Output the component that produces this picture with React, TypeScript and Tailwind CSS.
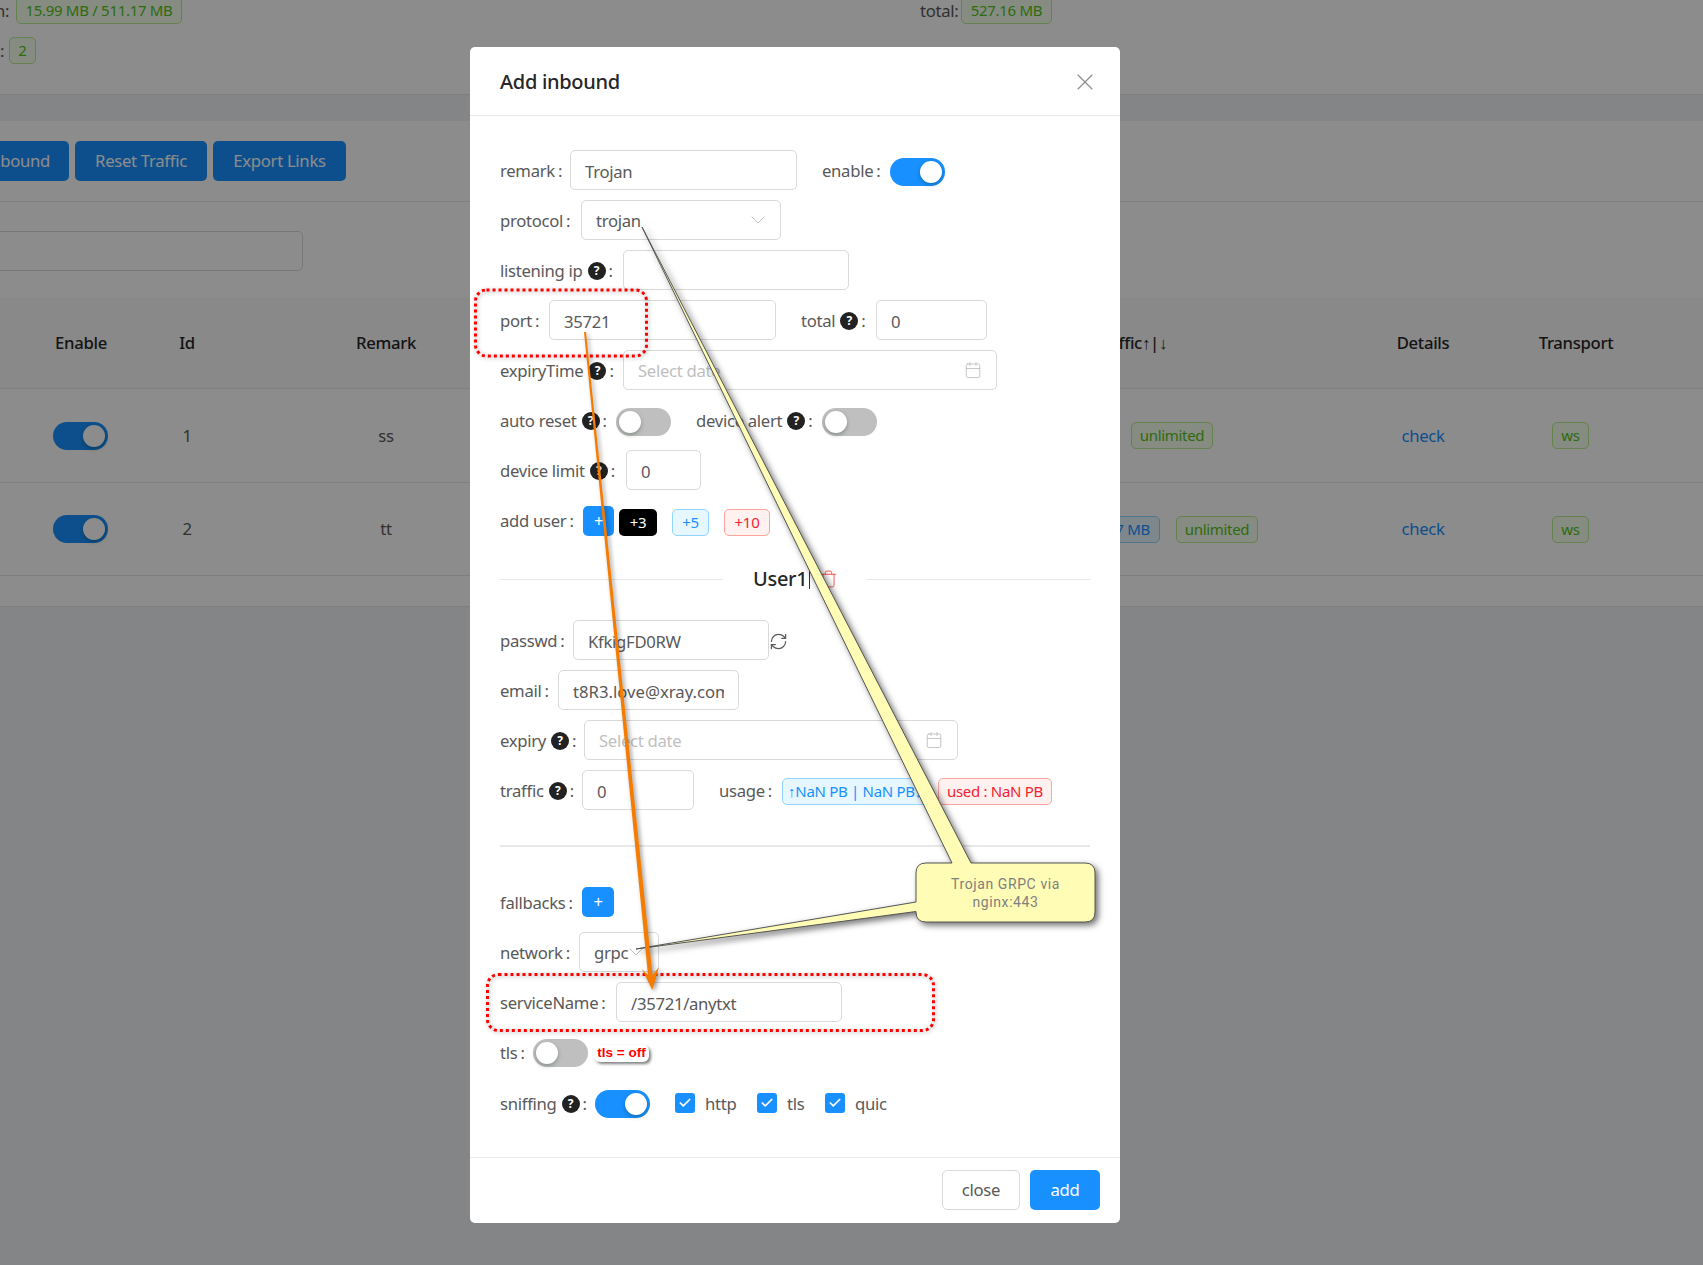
import React from 'react';
import { X, ChevronDown, Calendar, RefreshCw, Check, Trash } from 'lucide-react';

const Tag = ({ color, className = '', children }: { color: 'green' | 'blue' | 'red'; className?: string; children: React.ReactNode }) => {
  const tone = color === 'green'
    ? 'bg-[#f6ffed] border-[#b7eb8f] text-[#52c41a]'
    : color === 'blue'
      ? 'bg-[#e6f7ff] border-[#91d5ff] text-[#1890ff]'
      : 'bg-[#fff1f0] border-[#ffa39e] text-[#f5222d]';
  return (
    <span className={`inline-flex items-center justify-center shrink-0 h-[27px] px-[9px] border rounded-[5px] text-[15px] whitespace-nowrap ${tone} ${className}`}>
      {children}
    </span>
  );
};

const Switch = ({ on, className = '' }: { on?: boolean; className?: string }) => (
  <span className={`flex items-center shrink-0 w-[55px] h-[28px] px-[3px] rounded-full ${on ? 'bg-[#1890ff] justify-end' : 'bg-[#bfbfbf] justify-start'} ${className}`}>
    <span className="w-[22px] h-[22px] rounded-full bg-white shadow-[0_2px_4px_rgba(0,35,11,0.3)]" />
  </span>
);

const Help = () => (
  <span className="flex items-center justify-center shrink-0 w-[18px] h-[18px] ml-[5px] rounded-full bg-[#222] text-white text-[12px] font-bold leading-none">?</span>
);

const Label = ({ className, help, children }: { className: string; help?: boolean; children: React.ReactNode }) => (
  <span className={`flex items-center shrink-0 pt-[2px] whitespace-nowrap ${className}`}>
    {children}
    {help && <Help />}
    <span className="ml-[3px]">:</span>
  </span>
);

const Row = ({ className = '', children }: { className?: string; children: React.ReactNode }) => (
  <div className={`flex items-center h-10 mb-2.5 ${className}`}>{children}</div>
);

const Field = ({ className, value, placeholder }: { className: string; value?: string; placeholder?: string }) => (
  <input
    readOnly
    value={value ?? ''}
    placeholder={placeholder}
    className={`h-10 pt-[2px] px-[14px] shrink-0 border border-[#d9d9d9] rounded-[5px] bg-white text-[#595959] placeholder:text-[#bfbfbf] outline-none ${className}`}
  />
);

const Picker = ({ className, text, date }: { className: string; text: string; date?: boolean }) => (
  <div className={`flex items-center justify-between h-10 shrink-0 border border-[#d9d9d9] rounded-[5px] bg-white ${date ? 'pl-[14px] pr-[14px]' : 'pl-[14px] pr-[10px]'} ${className}`}>
    <span className={`pt-[2px] ${date ? 'text-[#bfbfbf]' : 'text-[#595959]'}`}>{text}</span>
    {date
      ? <Calendar className="w-[18px] h-[18px] text-[#bfbfbf]" strokeWidth={1.2} />
      : <ChevronDown className="w-6 h-6 -ml-[10px] shrink-0 text-[#bfbfbf]" strokeWidth={1} />}
  </div>
);

const Box = ({ label, className }: { label: string; className: string }) => (
  <span className={`flex items-center shrink-0 ${className}`}>
    <span className="flex items-center justify-center w-5 h-5 rounded-[3px] bg-[#1890ff]">
      <Check className="w-[14px] h-[14px] text-white" strokeWidth={3} />
    </span>
    <span className="ml-[10px] pt-[2px] text-[#595959]">{label}</span>
  </span>
);

const TopButton = ({ className, children }: { className: string; children: React.ReactNode }) => (
  <button className={`flex items-center h-10 shrink-0 rounded-[5px] bg-[#1890ff] text-white ${className}`}>{children}</button>
);

const TableRow = ({ id, remark, traffic, border }: { id: string; remark: string; traffic: React.ReactNode; border: string }) => (
  <div className={`flex items-center border-b border-[#e8e8e8] text-[#595959] ${border}`}>
    <div className="flex justify-center w-[162px] pr-[1px]"><Switch on /></div>
    <div className="w-[50px] text-center">{id}</div>
    <div className="w-[348px] text-center">{remark}</div>
    <div className="flex justify-end w-[780px]">{traffic}</div>
    <div className="w-[166px] text-center text-[#1890ff]">check</div>
    <div className="flex justify-center w-[140px]"><Tag color="green" className="w-[37px] mr-[11px]">ws</Tag></div>
  </div>
);

export default function App() {
  return (
    <div className="relative w-[1703px] h-[1265px] overflow-hidden bg-[#f0f2f5] text-[16.7px] tracking-[-0.3px] font-['Noto_Sans','Open_Sans',sans-serif]">
      {/* page under the dialog */}
      <div className="flex flex-col h-[95px] bg-white border-b border-[#e8e8e8] text-[#595959]">
        <div className="flex items-center h-[27px] -mt-[3px]">
          <div className="flex items-center w-[920px]">
            <span className="-ml-[9px] w-[25px]">in:</span>
            <Tag color="green" className="w-[166px]">15.99 MB / 511.17 MB</Tag>
          </div>
          <span className="w-[41px]">total:</span>
          <Tag color="green" className="w-[91px]">527.16 MB</Tag>
        </div>
        <div className="flex items-center mt-[13px]">
          <span className="w-[9px]">:</span>
          <Tag color="green" className="w-[27px]">2</Tag>
        </div>
      </div>
      <div className="mt-[26px] h-[486px] bg-white border-b border-[#e8e8e8]">
        <div className="flex items-center gap-[6px] h-[81px] border-b border-[#e8e8e8] -ml-[60px]">
          <TopButton className="justify-end w-[129px] pr-[19px]">Add Inbound</TopButton>
          <TopButton className="justify-center w-[132px]">Reset Traffic</TopButton>
          <TopButton className="justify-center w-[133px]">Export Links</TopButton>
        </div>
        <div className="h-[95px] pt-[29px]">
          <div className="h-10 w-[303px] border border-l-0 border-[#d9d9d9] rounded-r-[5px]" />
        </div>
        <div className="flex items-center h-[92px] bg-[#fafafa] border-b border-[#e8e8e8] font-medium text-[#262626]">
          <div className="w-[162px] text-center">Enable</div>
          <div className="w-[50px] text-center">Id</div>
          <div className="w-[348px] text-center">Remark</div>
          <div className="w-[780px] pr-[173px] text-right">Traffic↑|↓</div>
          <div className="w-[166px] text-center">Details</div>
          <div className="w-[140px] text-center">Transport</div>
        </div>
        <TableRow id="1" remark="ss" border="h-[94px]" traffic={<Tag color="green" className="mr-[127px] w-[82px]">unlimited</Tag>} />
        <TableRow
          id="2"
          remark="tt"
          border="h-[93px]"
          traffic={
            <>
              <Tag color="blue" className="mr-[16px]">↑15.99 MB | 511.17 MB</Tag>
              <Tag color="green" className="mr-[82px] w-[82px]">unlimited</Tag>
            </>
          }
        />
      </div>

      <div className="absolute inset-0 bg-black/45" />

      {/* dialog */}
      <div className="absolute left-[470px] top-[47px] flex flex-col w-[650px] h-[1176px] rounded-[5px] bg-white text-[#595959]">
        <div className="flex items-center justify-between h-[69px] pt-[2px] px-[30px] border-b border-[#e8e8e8] shrink-0">
          <span className="text-[20px] font-medium text-[#262626]">Add inbound</span>
          <X className="w-7 h-7 -mr-[9px] text-[#8c8c8c]" strokeWidth={1} />
        </div>

        <div className="flex-1 px-[30px] pt-[34px]">
          <Row>
            <Label className="w-[70px]">remark</Label>
            <Field className="w-[227px]" value="Trojan" />
            <Label className="w-[68px] ml-[25px]">enable</Label>
            <Switch on className="mt-[3px]" />
          </Row>
          <Row>
            <Label className="w-[81px]">protocol</Label>
            <Picker className="w-[200px]" text="trojan" />
          </Row>
          <Row>
            <Label className="w-[123px]" help>listening ip</Label>
            <Field className="w-[226px]" />
          </Row>
          <Row>
            <Label className="w-[49px]">port</Label>
            <Field className="w-[227px]" value="35721" />
            <Label className="w-[75px] ml-[25px]" help>total</Label>
            <Field className="w-[111px]" value="0" />
          </Row>
          <Row>
            <Label className="w-[123px]" help>expiryTime</Label>
            <Picker className="w-[374px]" text="Select date" date />
          </Row>
          <Row>
            <Label className="w-[116px]" help>auto reset</Label>
            <Switch className="mt-[3px]" />
            <Label className="w-[126px] ml-[25px]" help>device alert</Label>
            <Switch className="mt-[3px]" />
          </Row>
          <Row>
            <Label className="w-[126px]" help>device limit</Label>
            <Field className="w-[75px]" value="0" />
          </Row>
          <Row>
            <Label className="w-[83px]">add user</Label>
            <button className="w-[31px] h-[30px] mt-[2px] rounded-[5px] bg-[#1890ff] text-white">+</button>
            <span className="flex items-center justify-center w-[38px] h-[27px] ml-[5px] mt-[5px] rounded-[5px] bg-black text-white text-[15px]">+3</span>
            <Tag color="blue" className="w-[37px] ml-[15px] mt-[5px]">+5</Tag>
            <Tag color="red" className="w-[46px] ml-[15px] mt-[5px]">+10</Tag>
          </Row>

          <div className="flex items-center h-[58px] mb-[12px]">
            <div className="w-[223px] h-px bg-[#e8e8e8]" />
            <div className="flex items-center w-[143px] pl-[30px]">
              <span className="text-[20px] font-medium text-[#262626]">User1</span>
              <span className="w-px h-5 ml-[2px] bg-[#333]" />
              <Trash className="w-[19px] h-[20px] ml-[9px] text-[#ff4d4f]" strokeWidth={1.2} />
            </div>
            <div className="flex-1 h-px bg-[#e8e8e8]" />
          </div>

          <Row>
            <Label className="w-[73px]">passwd</Label>
            <Field className="w-[196px]" value="KfkigFD0RW" />
            <RefreshCw className="w-[19px] h-[19px] mt-[2px] text-[#595959]" strokeWidth={1.5} />
          </Row>
          <Row>
            <Label className="w-[58px]">email</Label>
            <Field className="w-[181px] tracking-normal" value="t8R3.love@xray.com" />
          </Row>
          <Row>
            <Label className="w-[84px]" help>expiry</Label>
            <Picker className="w-[374px]" text="Select date" date />
          </Row>
          <Row>
            <Label className="w-[82px]" help>traffic</Label>
            <Field className="w-[112px]" value="0" />
            <Label className="w-[63px] ml-[25px]">usage</Label>
            <Tag color="blue" className="w-[146px] mr-[10px] mt-[3px]">↑NaN PB | NaN PB↓</Tag>
            <Tag color="red" className="w-[114px] mt-[3px]">used : NaN PB</Tag>
          </Row>

          <div className="h-[2px] mt-[35px] mb-[35px] bg-[#e8e8e8]" />

          <Row>
            <Label className="w-[82px]">fallbacks</Label>
            <button className="w-[32px] h-[30px] rounded-[5px] bg-[#1890ff] text-white">+</button>
          </Row>
          <Row>
            <Label className="w-[79px]">network</Label>
            <Picker className="w-[80px]" text="grpc" />
          </Row>
          <Row>
            <Label className="w-[116px]">serviceName</Label>
            <Field className="w-[226px]" value="/35721/anytxt" />
          </Row>
          <Row>
            <Label className="w-[33px]">tls</Label>
            <Switch className="mt-[2px]" />
            <span className="flex items-center justify-center w-[55px] h-[17px] ml-[6px] mt-[2px] rounded-[6px] bg-white shadow-[2px_2px_3px_rgba(0,0,0,0.5)] text-[13.5px] tracking-normal font-bold text-[#ff0000] font-['Liberation_Sans',sans-serif]">tls = off</span>
          </Row>
          <Row className="mt-[11px]">
            <Label className="w-[95px]" help>sniffing</Label>
            <Switch on className="mt-[2px]" />
            <Box label="http" className="ml-[25px] w-[82px]" />
            <Box label="tls" className="w-[68px]" />
            <Box label="quic" className="w-[80px]" />
          </Row>
        </div>

        <div className="flex items-start justify-end gap-[10px] h-[66px] pt-[12px] pr-[20px] border-t border-[#e8e8e8] shrink-0">
          <button className="w-[78px] h-10 rounded-[5px] border border-[#d9d9d9] text-[#595959]">close</button>
          <button className="w-[70px] h-10 rounded-[5px] bg-[#1890ff] text-white">add</button>
        </div>
      </div>

      {/* annotations drawn on top of the screenshot */}
      <svg className="absolute inset-0 w-full h-full pointer-events-none" viewBox="0 0 1703 1265">
        <g className="drop-shadow-[1px_1px_2px_rgba(0,0,0,0.35)]" fill="none" stroke="#ff0000" strokeWidth="3" strokeDasharray="3 3">
          <rect x="475.5" y="290" width="171" height="66" rx="11" />
          <rect x="487.5" y="974.5" width="446" height="56" rx="11" />
        </g>
        <path
          className="drop-shadow-[3px_3px_3px_rgba(0,0,0,0.55)]"
          d="M926 863 L952 863 L642 227 L971 863 L1085 863 Q1095 863 1095 873 L1095 912 Q1095 922 1085 922 L926 922 Q916 922 916 912 L916 911.5 L636 949 L916 902 L916 873 Q916 863 926 863 Z"
          fill="#fffdb5"
          stroke="#555"
          strokeWidth="1"
        />
        <path
          className="drop-shadow-[2px_2px_2px_rgba(0,0,0,0.4)]"
          d="M584 332 L586 332 L652.5 975 L659 967 L652.3 990 L642 969 L648 975 Z"
          fill="#f57c00"
        />
      </svg>
      <div className="absolute left-[916px] top-[875px] w-[179px] text-center text-[14px] leading-[18px] tracking-[0.6px] text-[#808080] font-['Roboto',sans-serif]">
        Trojan GRPC via
        <br />
        nginx:443
      </div>
    </div>
  );
}
